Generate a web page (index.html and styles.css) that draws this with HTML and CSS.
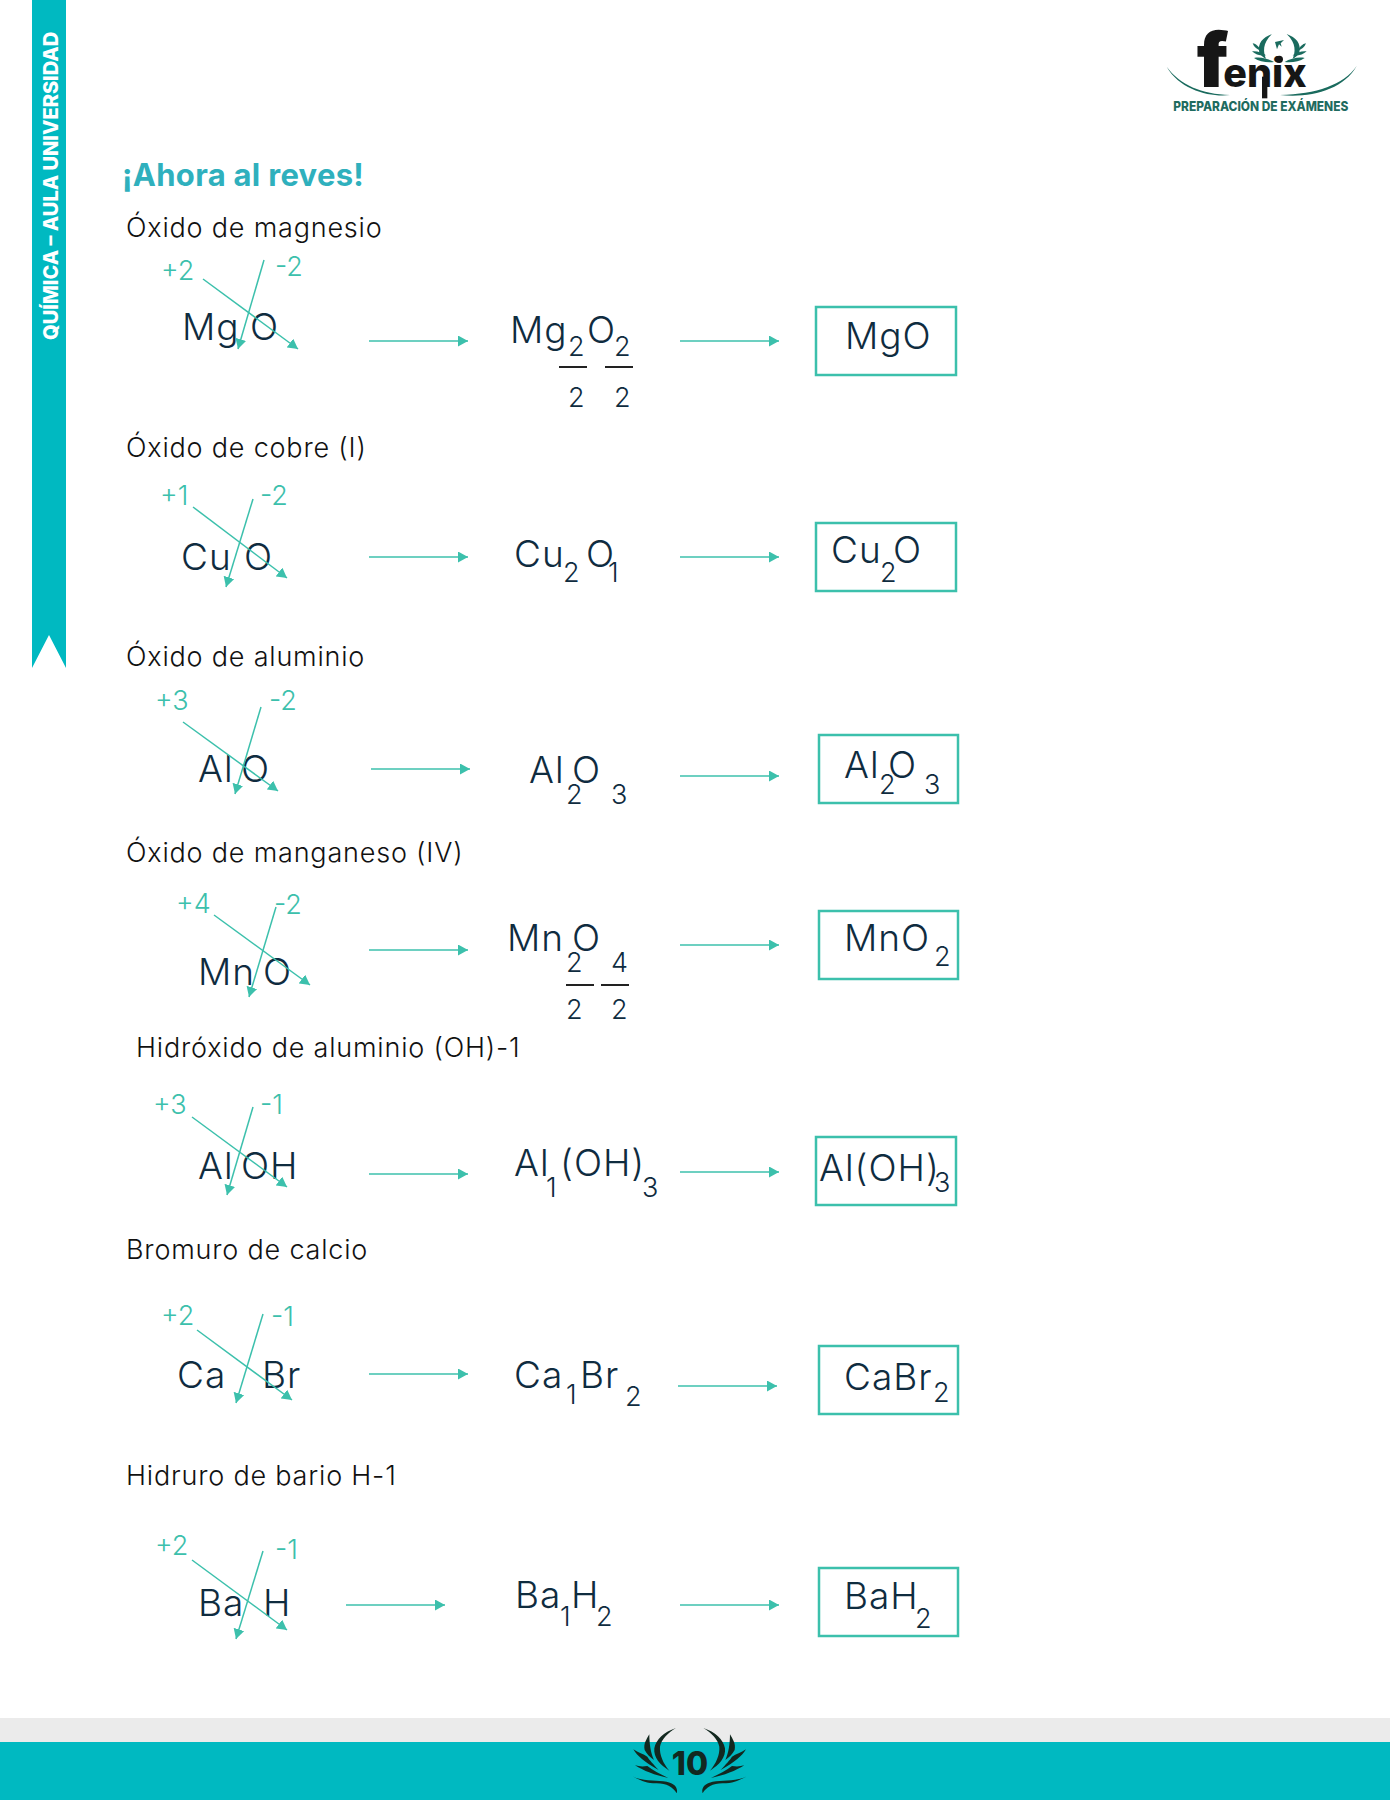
FILE: index.html
```html
<!DOCTYPE html>
<html lang="es">
<head>
    <meta charset="UTF-8">
    <meta name="viewport" content="width=device-width, initial-scale=1.0">
    <title>Química - Aula Universidad</title>
    <link rel="stylesheet" href="styles.css">
</head>
<body>

    <!-- punta de flecha compartida -->
    <svg class="defs" width="0" height="0">
        <defs>
            <marker id="punta" markerUnits="userSpaceOnUse" markerWidth="11" markerHeight="11" refX="10" refY="5.5" orient="auto">
                <path d="M0 0 L10 5.5 L0 11 Z" fill="#3cc0ac"/>
            </marker>
        </defs>
    </svg>

    <div class="pagina">
        <aside class="cinta"><span>QUÍMICA – AULA UNIVERSIDAD</span></aside>

        <main class="contenido">
            <header class="cabecera">
                <svg class="logo" viewBox="0 0 780 360">
                    <path class="logo-arco" d="M110 170 C150 225 215 252 300 255 C240 262 150 240 110 170 Z"/>
                    <path class="logo-arco" d="M680 168 C640 225 560 252 450 255 C540 265 640 240 680 168 Z"/>
                    <text class="logo-f" x="200" y="230">f</text>
                    <text class="logo-nombre" x="280" y="230" textLength="250" lengthAdjust="spacingAndGlyphs">enix</text>
                    <rect class="logo-negro" x="396" y="200" width="16" height="65"/>
                    <circle class="logo-negro" cx="448" cy="148" r="11"/>
                    <g class="logo-hoja">
                        <g id="rama">
                            <path d="M426 72 C398 82 382 100 388 128 C392 136 400 142 408 146 C400 128 396 100 426 72 Z"/>
                            <path d="M368 100 C378 102 388 110 392 122 C382 118 372 112 368 100 Z"/>
                            <path d="M366 124 C380 122 398 128 408 136 C392 138 376 134 366 124 Z"/>
                            <path d="M372 144 C390 140 415 146 432 156 C412 158 388 156 372 144 Z"/>
                        </g>
                        <use href="#rama" transform="translate(896,0) scale(-1,1)"/>
                        <path d="M441 118 L435 96 L462 90 L452 100 L455 110 L447 103 Z"/>
                    </g>
                    <text class="logo-lema" x="130" y="304" textLength="525" lengthAdjust="spacingAndGlyphs">PREPARACIÓN DE EXÁMENES</text>
                </svg>
            </header>

            <h1 class="titulo">¡Ahora al reves!</h1>

            <section class="ejercicio ej-1">
                <h2>Óxido de magnesio</h2>
                <div class="fila">
                    <svg class="cruce" viewBox="127 286 242 110">
                        <text class="carga" x="161" y="280">+2</text>
                        <text class="carga" x="275" y="276">-2</text>
                        <text class="sim" x="182" y="340">Mg</text>
                        <text class="sim" x="250" y="340">O</text>
                        <line class="traza" x1="203" y1="279" x2="298" y2="349" marker-end="url(#punta)"/>
                        <line class="traza" x1="264" y1="260" x2="238" y2="349" marker-end="url(#punta)"/>
                    </svg>
                    <svg class="flecha" viewBox="0 -55 100 110"><line class="traza" x1="0" y1="0" x2="99" y2="0" marker-end="url(#punta)"/></svg>
                    <svg class="formula" viewBox="469 286 211 110">
                        <text class="sim" x="510" y="343">Mg</text>
                        <text class="ind" x="568" y="356">2</text>
                        <text class="sim" x="587" y="343">O</text>
                        <text class="ind" x="614" y="356">2</text>
                        <rect class="barra" x="559" y="366" width="28" height="2"/>
                        <rect class="barra" x="605" y="366" width="28" height="2"/>
                        <text class="ind" x="568" y="407">2</text>
                        <text class="ind" x="614" y="407">2</text>
                    </svg>
                    <svg class="flecha" viewBox="0 -55 100 110"><line class="traza" x1="0" y1="0" x2="99" y2="0" marker-end="url(#punta)"/></svg>
                    <svg class="resultado" viewBox="780 286 180 110">
                        <rect class="caja" x="816" y="307" width="140" height="68"/>
                        <text class="sim" x="845" y="349">MgO</text>
                    </svg>
                </div>
            </section>

            <section class="ejercicio ej-2">
                <h2>Óxido de cobre (I)</h2>
                <div class="fila">
                    <svg class="cruce" viewBox="127 502 242 110">
                        <text class="carga" x="160" y="505">+1</text>
                        <text class="carga" x="260" y="505">-2</text>
                        <text class="sim" x="181" y="570">Cu</text>
                        <text class="sim" x="244" y="570">O</text>
                        <line class="traza" x1="193" y1="507" x2="287" y2="578" marker-end="url(#punta)"/>
                        <line class="traza" x1="253" y1="499" x2="226" y2="587" marker-end="url(#punta)"/>
                    </svg>
                    <svg class="flecha" viewBox="0 -55 100 110"><line class="traza" x1="0" y1="0" x2="99" y2="0" marker-end="url(#punta)"/></svg>
                    <svg class="formula" viewBox="469 502 211 110">
                        <text class="sim" x="514" y="567">Cu</text>
                        <text class="ind" x="563" y="582">2</text>
                        <text class="sim" x="586" y="567">O</text>
                        <text class="ind" x="608" y="582">1</text>
                    </svg>
                    <svg class="flecha" viewBox="0 -55 100 110"><line class="traza" x1="0" y1="0" x2="99" y2="0" marker-end="url(#punta)"/></svg>
                    <svg class="resultado" viewBox="780 502 180 110">
                        <rect class="caja" x="816" y="523" width="140" height="68"/>
                        <text class="sim" x="831" y="563">Cu</text>
                        <text class="ind" x="880" y="582">2</text>
                        <text class="sim" x="893" y="563">O</text>
                    </svg>
                </div>
            </section>

            <section class="ejercicio ej-3">
                <h2>Óxido de aluminio</h2>
                <div class="fila">
                    <svg class="cruce" viewBox="127 714 242 110">
                        <text class="carga" x="155" y="710">+3</text>
                        <text class="carga" x="269" y="710">-2</text>
                        <text class="sim" x="198" y="782">Al</text>
                        <text class="sim" x="241" y="782">O</text>
                        <line class="traza" x1="183" y1="722" x2="278" y2="791" marker-end="url(#punta)"/>
                        <line class="traza" x1="261" y1="707" x2="235" y2="794" marker-end="url(#punta)"/>
                    </svg>
                    <svg class="flecha" viewBox="0 -55 100 110"><line class="traza" x1="2" y1="0" x2="101" y2="0" marker-end="url(#punta)"/></svg>
                    <svg class="formula" viewBox="469 714 211 110">
                        <text class="sim" x="529" y="783">Al</text>
                        <text class="ind" x="566" y="804">2</text>
                        <text class="sim" x="572" y="783">O</text>
                        <text class="ind" x="611" y="804">3</text>
                    </svg>
                    <svg class="flecha" viewBox="0 -55 100 110"><line class="traza" x1="0" y1="7" x2="99" y2="7" marker-end="url(#punta)"/></svg>
                    <svg class="resultado" viewBox="780 714 180 110">
                        <rect class="caja" x="819" y="735" width="139" height="68"/>
                        <text class="sim" x="844" y="778">Al</text>
                        <text class="ind" x="879" y="794">2</text>
                        <text class="sim" x="888" y="778">O</text>
                        <text class="ind" x="924" y="794">3</text>
                    </svg>
                </div>
            </section>

            <section class="ejercicio ej-4">
                <h2>Óxido de manganeso (IV)</h2>
                <div class="fila">
                    <svg class="cruce" viewBox="127 895 242 110">
                        <text class="carga" x="176" y="913">+4</text>
                        <text class="carga" x="274" y="914">-2</text>
                        <text class="sim" x="198" y="985">Mn</text>
                        <text class="sim" x="263" y="985">O</text>
                        <line class="traza" x1="214" y1="915" x2="310" y2="985" marker-end="url(#punta)"/>
                        <line class="traza" x1="276" y1="907" x2="249" y2="997" marker-end="url(#punta)"/>
                    </svg>
                    <svg class="flecha" viewBox="0 -55 100 110"><line class="traza" x1="0" y1="0" x2="99" y2="0" marker-end="url(#punta)"/></svg>
                    <svg class="formula" viewBox="469 895 211 110">
                        <text class="sim" x="507" y="951">Mn</text>
                        <text class="sim" x="572" y="951">O</text>
                        <text class="ind" x="566" y="972">2</text>
                        <text class="ind" x="611" y="972">4</text>
                        <rect class="barra" x="566" y="984" width="28" height="2"/>
                        <rect class="barra" x="601" y="984" width="28" height="2"/>
                        <text class="ind" x="566" y="1019">2</text>
                        <text class="ind" x="611" y="1019">2</text>
                    </svg>
                    <svg class="flecha" viewBox="0 -55 100 110"><line class="traza" x1="0" y1="-5" x2="99" y2="-5" marker-end="url(#punta)"/></svg>
                    <svg class="resultado" viewBox="780 895 180 110">
                        <rect class="caja" x="819" y="911" width="139" height="68"/>
                        <text class="sim" x="844" y="951">MnO</text>
                        <text class="ind" x="934" y="966">2</text>
                    </svg>
                </div>
            </section>

            <section class="ejercicio ej-5">
                <h2>Hidróxido de aluminio (OH)-1</h2>
                <div class="fila">
                    <svg class="cruce" viewBox="127 1119 242 110">
                        <text class="carga" x="153" y="1114">+3</text>
                        <text class="carga" x="260" y="1114">-1</text>
                        <text class="sim" x="198" y="1179">Al</text>
                        <text class="sim" x="241" y="1179">OH</text>
                        <line class="traza" x1="192" y1="1117" x2="287" y2="1187" marker-end="url(#punta)"/>
                        <line class="traza" x1="253" y1="1107" x2="227" y2="1195" marker-end="url(#punta)"/>
                    </svg>
                    <svg class="flecha" viewBox="0 -55 100 110"><line class="traza" x1="0" y1="0" x2="99" y2="0" marker-end="url(#punta)"/></svg>
                    <svg class="formula" viewBox="469 1119 211 110">
                        <text class="sim" x="514" y="1176">Al</text>
                        <text class="ind" x="546" y="1197">1</text>
                        <text class="sim" x="560" y="1176">(OH)</text>
                        <text class="ind" x="642" y="1197">3</text>
                    </svg>
                    <svg class="flecha" viewBox="0 -55 100 110"><line class="traza" x1="0" y1="-2" x2="99" y2="-2" marker-end="url(#punta)"/></svg>
                    <svg class="resultado" viewBox="780 1119 180 110">
                        <rect class="caja" x="816" y="1137" width="140" height="68"/>
                        <text class="sim" x="819" y="1181">Al(OH)</text>
                        <text class="ind" x="934" y="1192">3</text>
                    </svg>
                </div>
            </section>

            <section class="ejercicio ej-6">
                <h2>Bromuro de calcio</h2>
                <div class="fila">
                    <svg class="cruce" viewBox="127 1319 242 110">
                        <text class="carga" x="161" y="1325">+2</text>
                        <text class="carga" x="271" y="1326">-1</text>
                        <text class="sim" x="177" y="1388">Ca</text>
                        <text class="sim" x="262" y="1388">Br</text>
                        <line class="traza" x1="197" y1="1330" x2="292" y2="1400" marker-end="url(#punta)"/>
                        <line class="traza" x1="263" y1="1314" x2="236" y2="1403" marker-end="url(#punta)"/>
                    </svg>
                    <svg class="flecha" viewBox="0 -55 100 110"><line class="traza" x1="0" y1="0" x2="99" y2="0" marker-end="url(#punta)"/></svg>
                    <svg class="formula" viewBox="469 1319 211 110">
                        <text class="sim" x="514" y="1388">Ca</text>
                        <text class="ind" x="566" y="1404">1</text>
                        <text class="sim" x="580" y="1388">Br</text>
                        <text class="ind" x="625" y="1406">2</text>
                    </svg>
                    <svg class="flecha" viewBox="0 -55 100 110"><line class="traza" x1="-2" y1="12" x2="97" y2="12" marker-end="url(#punta)"/></svg>
                    <svg class="resultado" viewBox="780 1319 180 110">
                        <rect class="caja" x="819" y="1346" width="139" height="68"/>
                        <text class="sim" x="844" y="1390">CaBr</text>
                        <text class="ind" x="933" y="1402">2</text>
                    </svg>
                </div>
            </section>

            <section class="ejercicio ej-7">
                <h2>Hidruro de bario H-1</h2>
                <div class="fila">
                    <svg class="cruce" viewBox="127 1550 242 110">
                        <text class="carga" x="155" y="1555">+2</text>
                        <text class="carga" x="275" y="1559">-1</text>
                        <text class="sim" x="198" y="1616">Ba</text>
                        <text class="sim" x="263" y="1616">H</text>
                        <line class="traza" x1="192" y1="1560" x2="287" y2="1630" marker-end="url(#punta)"/>
                        <line class="traza" x1="263" y1="1551" x2="236" y2="1639" marker-end="url(#punta)"/>
                    </svg>
                    <svg class="flecha" viewBox="0 -55 100 110"><line class="traza" x1="-23" y1="0" x2="76" y2="0" marker-end="url(#punta)"/></svg>
                    <svg class="formula" viewBox="469 1550 211 110">
                        <text class="sim" x="515" y="1608">Ba</text>
                        <text class="ind" x="560" y="1626">1</text>
                        <text class="sim" x="571" y="1608">H</text>
                        <text class="ind" x="596" y="1626">2</text>
                    </svg>
                    <svg class="flecha" viewBox="0 -55 100 110"><line class="traza" x1="0" y1="0" x2="99" y2="0" marker-end="url(#punta)"/></svg>
                    <svg class="resultado" viewBox="780 1550 180 110">
                        <rect class="caja" x="819" y="1568" width="139" height="68"/>
                        <text class="sim" x="844" y="1609">BaH</text>
                        <text class="ind" x="915" y="1628">2</text>
                    </svg>
                </div>
            </section>
        </main>
    </div>

    <footer class="pie">
        <div class="pie-gris"></div>
        <div class="pie-color"></div>
        <svg class="numero" viewBox="0 0 270 100">
            <g class="numero-hojas" transform="scale(0.3333)">
                <g id="alas">
                    <path d="M348 84 C312 96 288 118 283 145 C280 172 300 195 328 212 C310 190 298 165 300 140 C304 118 325 98 348 84 Z"/>
                    <path d="M268 103 C260 118 250 130 254 150 C260 162 270 172 282 180 C272 160 268 130 268 103 Z"/>
                    <path d="M220 148 C232 168 252 186 296 210 C280 192 268 180 262 170 C250 162 235 158 220 148 Z"/>
                    <path d="M225 196 C250 212 285 226 325 234 C300 222 280 212 262 198 C250 200 238 200 225 196 Z"/>
                    <path d="M217 229 C240 240 255 250 290 250 C320 250 340 262 350 280 C355 265 345 250 320 245 C290 240 250 245 217 229 Z"/>
                </g>
                <use href="#alas" transform="translate(778,0) scale(-1,1)"/>
            </g>
            <text class="numero-texto" x="130" y="75">10</text>
        </svg>
    </footer>

</body>
</html>
```

FILE: styles.css
```css
body {
    font-family: 'Inter', 'Liberation Sans', sans-serif;
    background-color: #fff;
    margin: 0;
    padding: 0;
    width: 1390px;
    height: 1800px;
    overflow: hidden;
    position: relative;
}

.defs {
    display: block;
    height: 0;
}

.pagina {
    display: flex;
    align-items: flex-start;
    height: 1718px;
}

/* Cinta lateral */
.cinta {
    width: 34px;
    height: 668px;
    margin-left: 32px;
    background-color: #00b9c1;
    clip-path: polygon(0 0, 100% 0, 100% 100%, 50% 635px, 0 100%);
    display: flex;
    justify-content: center;
    padding-top: 30px;
    padding-left: 3px;
    box-sizing: border-box;
}

.cinta span {
    writing-mode: vertical-rl;
    transform: rotate(180deg);
    height: 310px;
    color: #fff;
    font-size: 20px;
    font-weight: 800;
    white-space: nowrap;
    line-height: 34px;
}

.contenido {
    margin-left: 57px;
    flex-grow: 1;
}

.cabecera {
    display: flex;
    justify-content: flex-end;
    padding-top: 10px;
}

.logo {
    width: 260px;
    height: 120px;
}

.logo-f {
    font-size: 225px;
    font-weight: 900;
    fill: #161616;
}

.logo-nombre {
    font-size: 118px;
    font-weight: 800;
    fill: #161616;
}

.logo-negro {
    fill: #161616;
}

.logo-arco,
.logo-hoja {
    fill: #1a6b5e;
}

.logo-lema {
    font-size: 40px;
    font-weight: 800;
    fill: #1f6b5f;
}

.titulo {
    margin: 28px 0 20px -1px;
    font-size: 31px;
    line-height: 34px;
    font-weight: 700;
    letter-spacing: 0.3px;
    color: #2fb0bd;
}

.ejercicio {
    padding-left: 3px;
}

.ejercicio h2 {
    margin: 0;
    font-size: 27px;
    line-height: 32px;
    font-weight: 300;
    letter-spacing: 0.8px;
    color: #111;
}

.fila {
    display: grid;
    grid-template-columns: 242px 100px 211px 100px 180px;
    height: 110px;
    margin-left: 1px;
}

.fila svg {
    width: 100%;
    height: 110px;
    overflow: visible;
}

/* Cada ejercicio tiene su propio alto */
.ej-1 { height: 220px; }
.ej-1 .fila { margin-top: 42px; }
.ej-2 { height: 209px; }
.ej-2 .fila { margin-top: 38px; }
.ej-3 { height: 196px; }
.ej-3 .fila { margin-top: 41px; }
.ej-4 { height: 195px; }
.ej-4 .fila { margin-top: 26px; }
.ej-5 { height: 202px; }
.ej-5 h2 { padding-left: 10px; }
.ej-5 .fila { margin-top: 55px; }
.ej-6 { height: 226px; }
.ej-6 .fila { margin-top: 53px; }
.ej-7 .fila { margin-top: 58px; }

.sim {
    font-size: 37px;
    font-weight: 300;
    letter-spacing: 1px;
    fill: #0f2c3f;
}

.ind {
    font-size: 27px;
    font-weight: 300;
    fill: #0f2c3f;
}

.carga {
    font-size: 27px;
    font-weight: 300;
    fill: #3cc0ac;
}

.traza {
    stroke: #3cc0ac;
    stroke-width: 1.5;
}

.barra {
    fill: #222;
}

.caja {
    fill: none;
    stroke: #3cc0ac;
    stroke-width: 2.5;
}

/* Pie de pagina */
.pie {
    position: relative;
    height: 82px;
}

.pie-gris {
    height: 24px;
    background-color: #ebebeb;
}

.pie-color {
    height: 58px;
    background-color: #00b9c1;
}

.numero {
    position: absolute;
    left: 560px;
    top: -18px;
    width: 270px;
    height: 100px;
}

.numero-hojas {
    fill: #12281f;
}

.numero-texto {
    font-size: 32px;
    font-weight: 800;
    fill: #12281f;
    text-anchor: middle;
}
```
